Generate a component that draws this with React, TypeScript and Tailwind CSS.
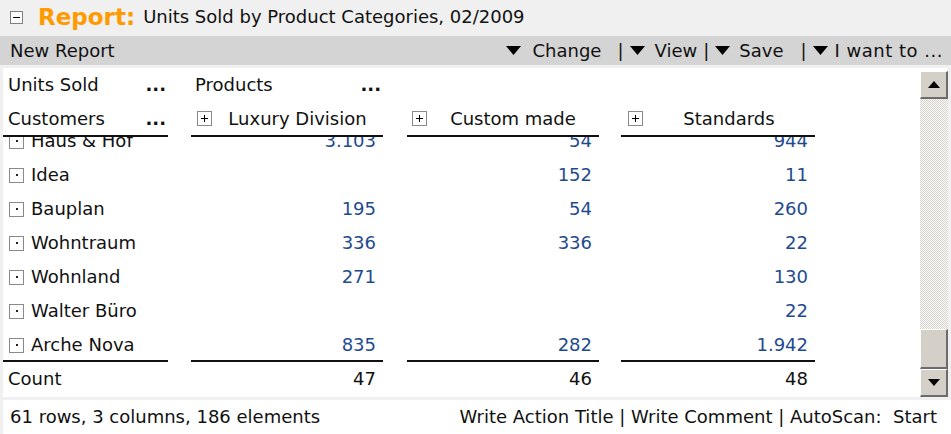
import React from 'react';

const rows = [
  { name: 'Haus & Hof', lux: '3.103', custom: '54', std: '944' },
  { name: 'Idea', lux: '', custom: '152', std: '11' },
  { name: 'Bauplan', lux: '195', custom: '54', std: '260' },
  { name: 'Wohntraum', lux: '336', custom: '336', std: '22' },
  { name: 'Wohnland', lux: '271', custom: '', std: '130' },
  { name: 'Walter Büro', lux: '', custom: '', std: '22' },
  { name: 'Arche Nova', lux: '835', custom: '282', std: '1.942' },
];

const c1 = 'w-[165px] shrink-0';
const c2 = 'ml-[23px] w-[192px] shrink-0';
const c3 = 'ml-[24px] w-[192px] shrink-0';
const c4 = 'ml-[22px] w-[194px] shrink-0';

function Caret() {
  return (
    <svg width="15" height="9" viewBox="0 0 15 9" className="shrink-0">
      <path d="M0 0h15L7.5 9z" fill="#000" />
    </svg>
  );
}

function PlusBox() {
  return (
    <span className="relative flex h-[15px] w-[15px] shrink-0 items-center justify-center border border-[#8a8a8a] bg-white">
      <span className="absolute h-[1px] w-[7px] bg-black" />
      <span className="absolute h-[7px] w-[1px] bg-black" />
    </span>
  );
}

function DotBox() {
  return (
    <span className="flex h-[15px] w-[15px] shrink-0 items-center justify-center border border-[#8a8a8a] bg-white">
      <span className="h-[2px] w-[2px] bg-[#222]" />
    </span>
  );
}

function Dots() {
  return <span className="font-bold">...</span>;
}

function ScrollButton({ up }: { up?: boolean }) {
  return (
    <div className="flex h-[28px] w-[28px] items-center justify-center border-t border-l border-t-white border-l-white border-r-2 border-b-2 border-r-[#6b6b6b] border-b-[#6b6b6b] bg-[#d4d0c8]">
      <svg width="12" height="7" viewBox="0 0 12 7">
        <path d={up ? 'M0 7h12L6 0z' : 'M0 0h12L6 7z'} fill="#000" />
      </svg>
    </div>
  );
}

export default function App() {
  return (
    <div className="flex h-[434px] w-[951px] flex-col overflow-hidden bg-[#f0f0f0] text-[18px] leading-none text-[#111] font-['DejaVu_Sans',sans-serif]">
      {/* title */}
      <div className="flex h-[34px] items-center pl-[10px]">
        <span className="relative flex h-[13px] w-[13px] items-center justify-center border border-[#808080] bg-white">
          <span className="h-[1px] w-[7px] bg-black" />
        </span>
        <span className="ml-[15px] text-[23px] font-bold text-[#ff9a00]">Report:</span>
        <span className="ml-[8px]">Units Sold by Product Categories, 02/2009</span>
      </div>

      {/* toolbar */}
      <div className="mt-[2px] flex h-[29px] items-center bg-[#d4d4d4] pl-[10px] pr-[8px]">
        <span>New Report</span>
        <div className="ml-auto flex items-center">
          <Caret />
          <span className="ml-[12px]">Change</span>
          <span className="ml-[16px]">|</span>
          <span className="ml-[6px]"><Caret /></span>
          <span className="ml-[10px]">View</span>
          <span className="ml-[6px]">|</span>
          <span className="ml-[6px]"><Caret /></span>
          <span className="ml-[9px]">Save</span>
          <span className="ml-[17px]">|</span>
          <span className="ml-[6px]"><Caret /></span>
          <span className="ml-[7px] tracking-[0.5px]">I want to ...</span>
        </div>
      </div>

      {/* table area */}
      <div className="ml-[3px] mt-[3px] flex h-[329px]">
        <div className="w-[917px] bg-white">
          {/* header rows */}
          <div className="flex h-[34px] items-center">
            <div className={`${c1} flex justify-between pl-[5px] pr-[2px]`}>
              <span>Units Sold</span>
              <Dots />
            </div>
            <div className={`${c2} flex justify-between pl-[4px] pr-[2px]`}>
              <span>Products</span>
              <Dots />
            </div>
          </div>
          <div className="flex h-[35px]">
            <div className={`${c1} flex items-center justify-between border-b-2 border-[#111] pl-[5px] pr-[2px]`}>
              <span>Customers</span>
              <Dots />
            </div>
            <div className={`${c2} flex items-center border-b-2 border-[#111] pl-[6px]`}>
              <PlusBox />
              <span className="flex-1 text-center">Luxury Division</span>
            </div>
            <div className={`${c3} flex items-center border-b-2 border-[#111] pl-[5px]`}>
              <PlusBox />
              <span className="flex-1 text-center">Custom made</span>
            </div>
            <div className={`${c4} flex items-center border-b-2 border-[#111] pl-[7px]`}>
              <PlusBox />
              <span className="flex-1 text-center">Standards</span>
            </div>
          </div>

          {/* body, scrolled */}
          <div className="h-[223px] overflow-hidden">
            <div className="-mt-[13px]">
              {rows.map((r) => (
                <div key={r.name} className="flex h-[34px] items-center">
                  <div className={`${c1} flex items-center gap-[7px] pl-[6px]`}>
                    <DotBox />
                    <span>{r.name}</span>
                  </div>
                  <div className={`${c2} pr-[7px] text-right text-[#1f4b8e]`}>{r.lux}</div>
                  <div className={`${c3} pr-[7px] text-right text-[#1f4b8e]`}>{r.custom}</div>
                  <div className={`${c4} pr-[7px] text-right text-[#1f4b8e]`}>{r.std}</div>
                </div>
              ))}
            </div>
          </div>

          {/* count */}
          <div className="flex h-[36px]">
            <div className={`${c1} flex items-center border-t-2 border-[#111] pl-[5px]`}>Count</div>
            <div className={`${c2} flex items-center justify-end border-t-2 border-[#111] pr-[7px]`}>47</div>
            <div className={`${c3} flex items-center justify-end border-t-2 border-[#111] pr-[7px]`}>46</div>
            <div className={`${c4} flex items-center justify-end border-t-2 border-[#111] pr-[7px]`}>48</div>
          </div>
        </div>

        {/* scrollbar */}
        <div className="flex w-[28px] flex-col bg-white pt-[3px]">
          <ScrollButton up />
          <div className="flex-1 bg-[repeating-conic-gradient(#d4d0c8_0_25%,#ffffff_0_50%)] bg-[length:2px_2px]" />
          <div className="h-[40px] border-t border-l border-t-white border-l-white border-r-2 border-b-2 border-r-[#6b6b6b] border-b-[#6b6b6b] bg-[#d4d0c8]" />
          <ScrollButton />
        </div>
      </div>

      {/* status bar */}
      <div className="ml-[3px] mt-[3px] flex flex-1 items-center bg-white pl-[7px] pr-[14px]">
        <span>61 rows, 3 columns, 186 elements</span>
        <span className="ml-auto">Write Action Title | Write Comment | AutoScan:&nbsp; Start</span>
      </div>
    </div>
  );
}
